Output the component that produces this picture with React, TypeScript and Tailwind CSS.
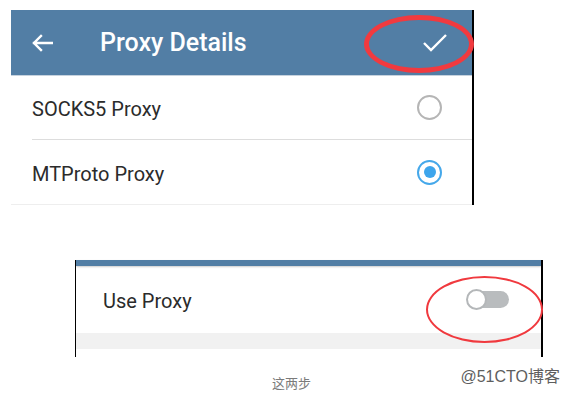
import React from 'react';

const font = { fontFamily: 'Roboto, "Noto Sans", sans-serif' };

const Radio = ({ checked }: { checked?: boolean }) =>
  checked ? (
    <span className="block w-[25px] h-[25px] rounded-full border-[2.5px] border-[#45a8ea] flex items-center justify-center">
      <span className="block w-[12px] h-[12px] rounded-full bg-[#3da5ec]" />
    </span>
  ) : (
    <span className="block w-[25px] h-[25px] rounded-full border-[2.5px] border-[#b5b5b5]" />
  );

const App: React.FC = () => {
  return (
    <div className="relative w-[569px] h-[398px] bg-white overflow-hidden" style={font}>
      {/* top screen */}
      <div className="pt-[10px] pl-[11px]">
        <div className="w-[463px] border-r-[2px] border-black">
          <div className="h-[66px] bg-[#527ea5] flex items-center border-b border-[#c6d2de]">
            <svg className="ml-[21px]" width="21" height="18" viewBox="0 0 21 18" fill="none" stroke="white" strokeWidth="2.4" strokeLinecap="square">
              <path d="M2 9H20M9 2L2 9L9 16" />
            </svg>
            <span className="ml-[47px] text-[25px] font-medium text-white leading-none">Proxy Details</span>
            <svg className="ml-auto mr-[25px]" width="24" height="18" viewBox="0 0 24 18" fill="none" stroke="white" strokeWidth="2.4">
              <path d="M1 9L8 16L23 1" />
            </svg>
          </div>
          <div className="ml-[21px] h-[64px] flex items-center border-b border-[#dddddd] pr-[30px]">
            <span className="text-[20px] text-[#2b2b2b] pt-[3px]">SOCKS5 Proxy</span>
            <span className="ml-auto"><Radio /></span>
          </div>
          <div className="h-[65px] flex items-center border-b border-[#eeeeee] pl-[21px] pr-[30px]">
            <span className="text-[20px] text-[#2b2b2b] pt-[3px]">MTProto Proxy</span>
            <span className="ml-auto"><Radio checked /></span>
          </div>
        </div>
      </div>

      {/* bottom screen */}
      <div className="mt-[55px] ml-[75px] w-[468px] h-[97px] border-l border-r-[2px] border-black flex flex-col">
        <div className="h-[6px] bg-[#527ea5] shadow-[0_1px_2px_rgba(0,0,0,0.2)]" />
        <div className="h-[67px] flex items-center pl-[27px] pr-[32px]">
          <span className="text-[20px] text-[#2b2b2b] pt-[3px]">Use Proxy</span>
          <span className="ml-auto relative w-[42px] h-[17px] rounded-full bg-[#b9bcbe]">
            <span className="absolute left-[-1px] top-[-2px] w-[21px] h-[21px] rounded-full bg-white border-2 border-[#b4b7b9]" />
          </span>
        </div>
        <div className="h-[16px] bg-[#f1f1f1]" />
      </div>

      {/* captions */}
      <div className="flex items-start">
        <span className="ml-[272px] mt-[16px] text-[13px] text-[#7b7b7b]" style={{ fontFamily: '"Noto Sans CJK SC", sans-serif' }}>这两步</span>
        <span className="ml-auto mr-[9px] mt-[10px] text-[16px] text-[#5e5e5e] leading-[20px]" style={{ fontFamily: '"Liberation Sans", "Noto Sans CJK SC", sans-serif' }}>@51CTO博客</span>
      </div>

      {/* annotations */}
      <span className="absolute left-[364px] top-[15px] w-[110px] h-[58px] rounded-[50%] border-[5px] border-[#f13a3f]" />
      <span className="absolute left-[426px] top-[276px] w-[117px] h-[67px] rounded-[50%] border-2 border-[#f0393e]" />
    </div>
  );
};

export default App;
